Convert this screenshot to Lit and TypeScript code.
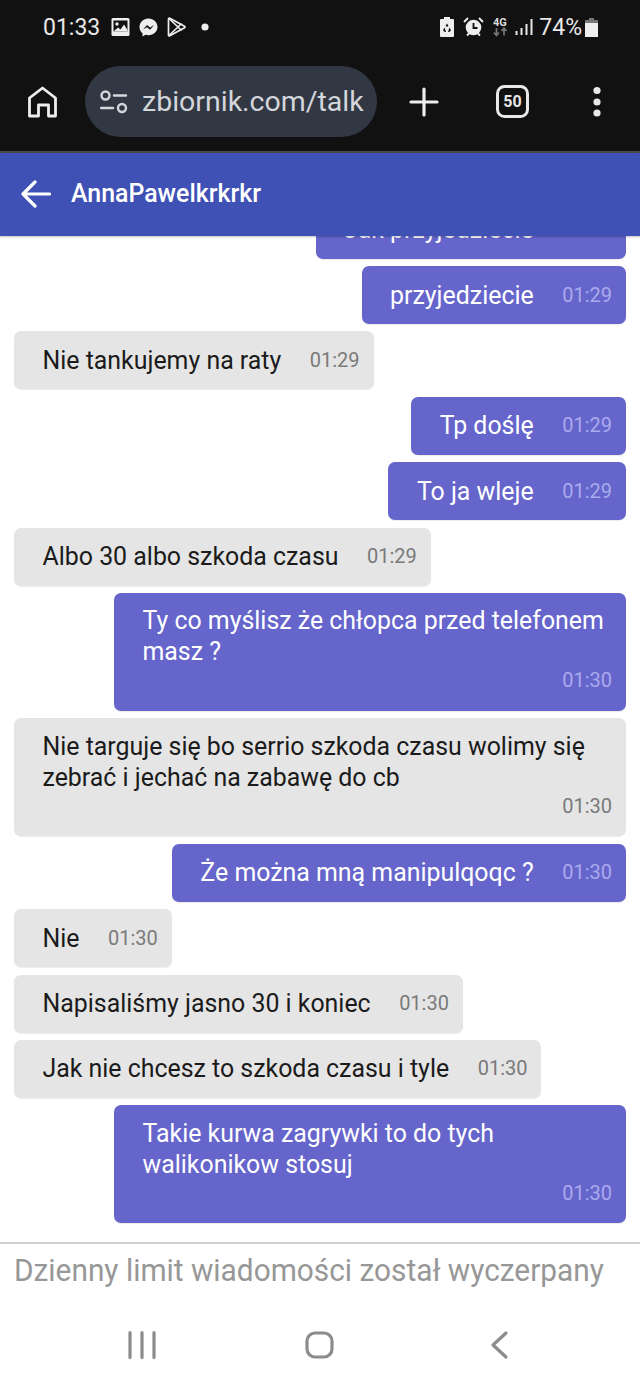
import { LitElement, html, css } from "lit";
import { customElement } from "lit/decorators.js";

type Msg = { t: string; time: string; me?: boolean; multi?: boolean };
const msgs: Msg[] = [
  { t: "Jak przyjedziecie", time: "01:29", me: true },
  { t: "przyjedziecie", time: "01:29", me: true },
  { t: "Nie tankujemy na raty", time: "01:29" },
  { t: "Tp doślę", time: "01:29", me: true },
  { t: "To ja wleje", time: "01:29", me: true },
  { t: "Albo 30 albo szkoda czasu", time: "01:29" },
  { t: "Ty co myślisz że chłopca przed telefonem masz ?", time: "01:30", me: true, multi: true },
  { t: "Nie targuje się bo serrio szkoda czasu wolimy się zebrać i jechać na zabawę do cb", time: "01:30", multi: true },
  { t: "Że można mną manipulqoqc ?", time: "01:30", me: true },
  { t: "Nie", time: "01:30" },
  { t: "Napisaliśmy jasno 30 i koniec", time: "01:30" },
  { t: "Jak nie chcesz to szkoda czasu i tyle", time: "01:30" },
  { t: "Takie kurwa zagrywki to do tych walikonikow stosuj", time: "01:30", me: true, multi: true },
];

@customElement("app-root")
export class AppRoot extends LitElement {
  static styles = css`
    :host { display: block; width: 640px; height: 1387px; font-family: Roboto, "Liberation Sans", sans-serif; background: #fff; overflow: hidden; }
    .page { display: flex; flex-direction: column; height: 1387px; }
    .chrome { background: #111112; height: 151px; flex: none; color: #eee; }
    .status { height: 53px; padding: 1px 42px 0 43px; display: flex; align-items: center; font-size: 23px; color: #e8e8e8; box-sizing: border-box; }
    .status .clock { width: 68px; }
    .sicons { display: flex; align-items: center; gap: 9px; }
    .spacer { flex: 1; }
    .right { display: flex; align-items: center; }
    .toolbar { height: 71px; margin-top: 13px; display: flex; align-items: center; }
    .home { margin-left: 26px; width: 34px; height: 34px; }
    .pill { margin-left: 25px; width: 292px; height: 71px; border-radius: 36px; background: #323843; display: flex; align-items: center; box-sizing: border-box; padding-left: 15px; overflow: hidden; }
    .url { margin-left: 14px; font-size: 28.5px; color: #d3d6db; white-space: nowrap; }
    .plus { margin-left: 32px; width: 30px; height: 30px; }
    .tabs { margin-left: 57px; width: 33px; height: 33px; }
    .dots { margin-left: 63px; width: 10px; height: 32px; }
    .sep { height: 2px; background: #4a4b4e; flex: none; }
    .head { height: 83px; flex: none; background: #3f51b5; display: flex; align-items: center; color: #fff; padding: 0 0 2px 21px; box-sizing: border-box; box-shadow: 0 1px 2px rgba(0,0,0,.25); position: relative; z-index: 1; }
    .arrow { width: 30px; height: 28px; }
    .title { margin-left: 20px; font-size: 24.9px; font-weight: 500; }
    .list { height: 1006px; flex: none; overflow: hidden; display: flex; flex-direction: column; justify-content: flex-end; gap: 7.4px; padding: 0 14px 18.7px; box-sizing: border-box; }
    .b { flex: none; box-sizing: border-box; border-radius: 7px; padding: 0 14px 0 28.5px; min-height: 58px; font-size: 24.9px; line-height: 31px; display: flex; align-items: center; gap: 28.5px; color: #1b1b1b; background: #e5e5e5; align-self: flex-start; max-width: 612px; box-shadow: 0 1px 1px rgba(0,0,0,.08); }
    .b.me { background: #6565cb; color: #fff; align-self: flex-end; max-width: 512px; }
    .time { font-size: 20px; color: #7a7a7a; white-space: nowrap; flex: none; }
    .me .time { color: #aaaaec; }
    .b.multi { display: block; width: 100%; height: 118px; padding-top: 12.4px; }
    .b.multi .time { display: block; text-align: right; margin-top: -2px; line-height: 31px; }
    .input { flex: none; height: 50px; border-top: 2px solid #cfcfcf; box-sizing: border-box; padding: 4px 0 0 14px; display: flex; align-items: center; }
    .ph { font-size: 31px; color: #979797; white-space: nowrap; transform-origin: left center; transform: scaleX(0.962); }
    .nav { flex: 1; display: flex; align-items: flex-start; padding-top: 38px; box-sizing: border-box; }
    .nav svg { height: 30px; }
    .n1 { width: 28px; margin-left: 128px; }
    .n2 { width: 30px; margin-left: 149px; }
    .n3 { width: 20px; margin-left: 155px; }
  `;

  render() {
    return html`<div class="page">
      <div class="chrome">
        <div class="status">
          <span class="clock">01:33</span>
          <div class="sicons">
            <svg width="19" height="18" viewBox="0 0 19 18"><rect x=".5" width="18" height="18" rx="1.500" fill="#eee"/><rect x="2.500" y="2.500" width="14" height="11" fill="#111"/><circle cx="6" cy="6" r="1.700" fill="#eee"/><path d="M2.500 13.500l4.500-4 2.500 2 3.500-5 3.500 5.500v1.500z" fill="#eee"/></svg>
            <svg width="19" height="19" viewBox="0 0 19 19"><path d="M9.500.5C4.400.5.500 4.200.500 9c0 2.600 1.100 4.700 3 6.200v3.300l3-1.700c1 .3 2 .4 3 .4 5.100 0 9-3.700 9-8.200S14.600.5 9.500.5z" fill="#eee"/><path d="M4 11.500l4-4.500 3 2.500 4-2.500-4 4.800-3-2.500z" fill="#111"/></svg>
            <svg width="19" height="20" viewBox="0 0 19 20" fill="none" stroke="#eee" stroke-width="1.700" stroke-linejoin="round"><path d="M1.500 2c0-.8.700-1.200 1.300-.8L17.500 9.200c.7.400.7 1.200 0 1.600L2.800 18.800c-.6.400-1.300 0-1.300-.8z"/><path d="M2 1.500L11 10 2 18.500M11 10l3.500-3.500M11 10l3.500 3.500"/></svg>
          </div>
          <svg style="margin-left:14px" width="10" height="10" viewBox="0 0 10 10"><circle cx="5" cy="5" r="3.600" fill="#eee"/></svg>
          <div class="spacer"></div>
          <div class="right">
            <svg width="14" height="20" viewBox="0 0 14 20"><path d="M4 0h6v2h3a1 1 0 011 1v16a1 1 0 01-1 1H1a1 1 0 01-1-1V3a1 1 0 011-1h3z" fill="#eee"/><path d="M7 6.500l1.500 2.500-1.500 .8-1.500-.8zM9.500 10.500l1.500 3-2 1.500h-1zM4.500 10.500L3 13.500l2 1.500h1z" fill="#111"/></svg>
            <svg style="margin-left:9px" width="21" height="20" viewBox="0 0 21 20"><circle cx="10.500" cy="10.500" r="7.800" fill="#eee"/><path d="M10.500 6v5h4" fill="none" stroke="#111" stroke-width="1.800"/><path d="M1 5l4-4M20 5l-4-4M4 18.500l2-2M17 18.500l-2-2" stroke="#eee" stroke-width="1.800"/></svg>
            <svg style="margin-left:9px" width="15" height="20" viewBox="0 0 15 20"><text x="0" y="9" font-size="11" font-weight="700" font-family="Roboto" fill="#ddd">4G</text><path d="M3.500 11v7M1 15.500l2.500 3 2.500-3M11 18.500v-7M8.500 14l2.500-3 2.500 3" fill="none" stroke="#777" stroke-width="1.700"/></svg>
            <svg style="margin-left:7px" width="18" height="18" viewBox="0 0 18 18"><path d="M1.500 13v4M6.500 10v7M11.500 6v11M16.500 1v16" stroke="#e8e8e8" stroke-width="2"/></svg>
            <span style="margin-left:6px">74%</span>
            <svg style="margin-left:3px" width="13" height="19" viewBox="0 0 13 19"><path d="M4 0h5v2h4v17H0V2h4z" fill="#eee"/><path d="M4 0h5v2h4v3H0V2h4z" fill="#777"/></svg>
          </div>
        </div>
        <div class="toolbar">
          <svg class="home" viewBox="0 0 34 34" fill="none" stroke="#eee" stroke-width="2.800" stroke-linejoin="round"><path d="M3.500 31V13L16.500 3l13 10v18h-7V20h-10v11z"/></svg>
          <div class="pill">
            <svg width="28" height="24" viewBox="0 0 28 24" fill="none" stroke="#d3d6db" stroke-width="2.400" stroke-linecap="round"><circle cx="5.500" cy="5.500" r="4"/><path d="M14 5.500h12M1 18h12"/><circle cx="22" cy="18" r="4"/></svg>
            <span class="url">zbiornik.com/talk</span>
          </div>
          <svg class="plus" viewBox="0 0 30 30" stroke="#eee" stroke-width="3.200" stroke-linecap="round"><path d="M15 2v26M2 15h26"/></svg>
          <svg class="tabs" viewBox="0 0 33 33"><rect x="1.500" y="1.500" width="30" height="30" rx="7" fill="none" stroke="#e8e8e8" stroke-width="3"/><text x="16.500" y="22" text-anchor="middle" font-size="16" font-weight="700" font-family="Roboto" fill="#e8e8e8">50</text></svg>
          <svg class="dots" viewBox="0 0 10 32" fill="#e8e8e8"><circle cx="5" cy="4.500" r="3.600"/><circle cx="5" cy="16" r="3.600"/><circle cx="5" cy="27" r="3.600"/></svg>
        </div>
      </div>
      <div class="sep"></div>
      <div class="head">
        <svg class="arrow" viewBox="0 0 30 28" fill="none" stroke="#fff" stroke-width="3.200" stroke-linecap="round" stroke-linejoin="round"><path d="M28.500 14H2.500M14 2L2 14l12 12"/></svg>
        <span class="title">AnnaPawelkrkrkr</span>
      </div>
      <div class="list">
        ${msgs.map(
          (m) => html`<div class="b ${m.me ? "me" : ""} ${m.multi ? "multi" : ""}"><span>${m.t}</span><span class="time">${m.time}</span></div>`
        )}
      </div>
      <div class="input"><span class="ph">Dzienny limit wiadomości został wyczerpany</span></div>
      <div class="nav">
        <svg class="n1" viewBox="0 0 28 30" stroke="#8c8c8c" stroke-width="3.200" stroke-linecap="round"><path d="M2 2.500v25M14 2.500v25M26 2.500v25"/></svg>
        <svg class="n2" viewBox="0 0 30 30" fill="none" stroke="#8c8c8c" stroke-width="3.200"><rect x="2" y="3" width="25" height="24" rx="8"/></svg>
        <svg class="n3" viewBox="0 0 20 30" fill="none" stroke="#8c8c8c" stroke-width="3.200" stroke-linecap="round" stroke-linejoin="round"><path d="M16 3L3 15l13 12"/></svg>
      </div>
    </div>`;
  }
}
